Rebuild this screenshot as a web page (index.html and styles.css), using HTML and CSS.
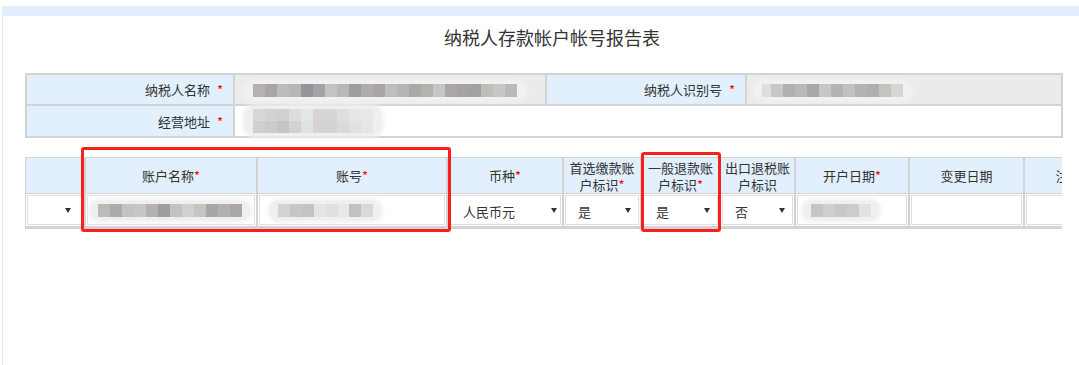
FILE: index.html
```html
<!DOCTYPE html>
<html lang="zh-CN">
<head>
<meta charset="utf-8">
<title>纳税人存款帐户帐号报告表</title>
<link rel="stylesheet" href="styles.css">
</head>
<body>
<div class="page">
  <h1 class="title">纳税人存款帐户帐号报告表</h1>

  <table class="info">
    <colgroup>
      <col class="ic-lab"><col class="ic-val"><col class="ic-lab2"><col class="ic-val2">
    </colgroup>
    <tr class="r1">
      <th>纳税人名称 <span class="req">*</span></th>
      <td class="ro"><span class="blur blur-ro"><span class="mosaic m-name"></span></span></td>
      <th>纳税人识别号 <span class="req">*</span></th>
      <td class="ro id"><span class="blur blur-ro"><span class="mosaic m-id"></span></span></td>
    </tr>
    <tr class="r2">
      <th>经营地址 <span class="req">*</span></th>
      <td colspan="3"><span class="blur"><span class="mosaic m-addr"></span></span></td>
    </tr>
  </table>

  <div class="grid-area">
    <div class="grid-clip">
      <table class="grid">
        <colgroup>
          <col class="g0"><col class="g1"><col class="g2"><col class="g3"><col class="g4">
          <col class="g5"><col class="g6"><col class="g7"><col class="g8"><col class="g9">
        </colgroup>
        <thead>
          <tr>
            <th></th>
            <th>账户名称<span class="req">*</span></th>
            <th>账号<span class="req">*</span></th>
            <th>币种<span class="req">*</span></th>
            <th><span class="ln">首选缴款账</span><span class="ln">户标识<span class="req">*</span></span></th>
            <th><span class="ln">一般退款账</span><span class="ln">户标识<span class="req">*</span></span></th>
            <th><span class="ln">出口退税账</span><span class="ln">户标识</span></th>
            <th>开户日期<span class="req">*</span></th>
            <th>变更日期</th>
            <th>注销日期</th>
          </tr>
        </thead>
        <tbody>
          <tr>
            <td><div class="box sel sel0"><span class="caret"></span></div></td>
            <td><div class="box inp inp-name"><span class="blur"><span class="mosaic m-acname"></span></span></div></td>
            <td><div class="box inp inp-no"><span class="tick"></span><span class="blur"><span class="mosaic m-acno"></span></span></div></td>
            <td><div class="box sel sel-cur"><span class="val">人民币元</span><span class="caret"></span></div></td>
            <td><div class="box sel"><span class="val">是</span><span class="caret"></span></div></td>
            <td><div class="box sel"><span class="val">是</span><span class="caret"></span></div></td>
            <td><div class="box sel"><span class="val">否</span><span class="caret"></span></div></td>
            <td><div class="box inp inp-date"><span class="blur"><span class="mosaic m-date"></span></span></div></td>
            <td><div class="box inp"></div></td>
            <td><div class="box inp"></div></td>
          </tr>
        </tbody>
      </table>
    </div>
    <div class="mark mark-a"></div>
    <div class="mark mark-b"></div>
  </div>
</div>
</body>
</html>
```

FILE: styles.css
```css
* { box-sizing: border-box; }

html, body {
  margin: 0;
  background: #fff;
  overflow: hidden;
}

body {
  font-family: "Microsoft YaHei", "Noto Sans CJK SC", "Noto Sans", sans-serif;
  font-size: 13px;
  color: #333;
}

.page {
  margin: 6px 0 0 2px;
  height: 359px;
  border-top: 10px solid #e1effe;
  border-left: 1px solid #dcebfd;
  padding: 9px 0 0 22px;
}

.title {
  margin: 0 0 24px;
  font-size: 18px;
  line-height: 24px;
  font-weight: normal;
  text-align: center;
  color: #333;
}

.req { color: #f00; }

/* ---------- info table ---------- */
.info {
  width: 1036px;
  table-layout: fixed;
  border-collapse: separate;
  border-spacing: 0;
  border: 1px solid #d3d3d3;
}
.ic-lab { width: 208px; }
.ic-val { width: 312px; }
.ic-lab2 { width: 200px; }
.ic-val2 { width: 316px; }

.info th,
.info td {
  border: 1px solid #d3d3d3;
  padding: 0;
  font-weight: normal;
}
.info th {
  background: #e2effd;
  text-align: right;
  padding-right: 10px;
}
.info th .req { margin-left: 4px; }
.info td { padding-left: 10px; background: #fff; }
.info td.ro { background: #ebebeb; }
.info td.id { padding-left: 7px; }
.info .r1 th, .info .r1 td { height: 31px; }
.info .r2 th, .info .r2 td { height: 32px; }

/* blurred (masked) values */
.blur {
  display: inline-flex;
  align-items: center;
  padding: 3px 8px;
  border-radius: 10px;
  background: #efefef;
  box-shadow: 0 0 4px 2px #efefef;
  vertical-align: middle;
}
.blur-ro {
  background: #f1f1f1;
  box-shadow: 0 0 4px 2px #f1f1f1;
}
.mosaic { display: block; height: 13px; }

.m-name {
  width: 264px;
  background: linear-gradient(90deg,
    #b5b1b1 0 12px, #a8a6a7 12px 24px, #bcbcbc 24px 36px, #b6b7b2 36px 48px,
    #98939a 48px 60px, #a3a3a9 60px 72px, #c3c3c1 72px 84px, #b8b9b4 84px 96px,
    #a09c9f 96px 108px, #adadaa 108px 120px, #aaa4a8 120px 132px, #bebebe 132px 144px,
    #b5b5b7 144px 156px, #a9a9ac 156px 168px, #b3b3ae 168px 180px, #c6c6c6 180px 192px,
    #aca6aa 192px 204px, #a4a4a4 204px 216px, #a2a2a4 216px 228px, #bdbdba 228px 240px,
    #c7c7c7 240px 252px, #bababa 252px 264px);
}
.m-id {
  width: 141px;
  background: linear-gradient(90deg,
    #dedede 0 9px, #c8c8c8 9px 21px, #b0b0b0 21px 33px, #b9b9b9 33px 45px,
    #a8a8a8 45px 57px, #c7c7c5 57px 69px, #b4b4b8 69px 81px, #c2c2c2 81px 93px,
    #b3b3b3 93px 105px, #aeaeae 105px 117px, #c3c3c0 117px 129px, #d6d6d6 129px 141px);
}
.m-addr {
  width: 120px;
  height: 24px;
  background:
    linear-gradient(90deg,
      #d8d8d8 0 12px, #d3d3d3 12px 24px, #d0d0d0 24px 36px, #dcdcdc 36px 48px,
      #e2e6e8 48px 60px, #d8d5d5 60px 72px, #d6d6d6 72px 84px, #e0dede 84px 96px,
      #e5e5e5 96px 108px, #e8e8e8 108px 120px) top / 100% 12px no-repeat,
    linear-gradient(90deg,
      #cfcfcf 0 12px, #cbcbcb 12px 24px, #c5c5c5 24px 36px, #d2d2d2 36px 48px,
      #dde3e5 48px 60px, #d5d3d3 60px 72px, #d3d3d3 72px 84px, #d9d9d9 84px 96px,
      #e0e0e0 96px 108px, #e6e6e6 108px 120px) bottom / 100% 12px no-repeat;
}
.m-acname {
  width: 144px;
  background: linear-gradient(90deg,
    #bdb9b9 0 12px, #aeaaab 12px 24px, #c3c3c3 24px 36px, #c7c7c7 36px 48px,
    #b6b2b3 48px 60px, #9e9ea2 60px 72px, #c2c2c0 72px 84px, #d0d0d0 84px 96px,
    #c2c6c0 96px 108px, #a7a7a5 108px 120px, #b3b0b3 120px 132px, #aaa6aa 132px 144px);
}
.m-acno {
  width: 95px;
  background: linear-gradient(90deg,
    #d3d3d3 0 12px, #c6c6c6 12px 24px, #c0c4c4 24px 36px, #e5e5e5 36px 48px,
    #e0e0e0 48px 60px, #e8e8e8 60px 71px, #c0c2c2 71px 83px, #d9d9d5 83px 95px);
}
.m-date {
  width: 60px;
  background: linear-gradient(90deg,
    #c5c5c5 0 12px, #cecece 12px 24px, #c5c8ca 24px 36px, #cdcdcd 36px 48px,
    #e2e2e2 48px 60px);
}

/* ---------- grid table ---------- */
.grid-area {
  position: relative;
  margin-top: 19px;
  width: 1037px;
}
.grid-clip {
  width: 1037px;
  overflow: hidden;
}
.grid {
  width: 1114px;
  table-layout: fixed;
  border-collapse: separate;
  border-spacing: 0;
  border-top: 1px solid #d3d3d3;
  border-left: 1px solid #d3d3d3;
  border-bottom: 1px solid #d3d3d3;
}
.g0 { width: 60px; }
.g1 { width: 172px; }
.g2 { width: 190px; }
.g3 { width: 116px; }
.g4 { width: 78px; }
.g5 { width: 79px; }
.g6 { width: 75px; }
.g7 { width: 114px; }
.g8 { width: 115px; }
.g9 { width: 115px; }

.grid th,
.grid td {
  border: 1px solid #d3d3d3;
  border-left: 0;
  border-top: 0;
  padding: 0;
}
.grid th {
  height: 36px;
  background: #e2effd;
  font-weight: normal;
  text-align: center;
  line-height: 17px;
  padding: 0 2px;
  border-right: 2px solid #d3d3d3;
  white-space: nowrap;
}
.grid th .ln { display: block; }
.grid td {
  height: 34px;
  padding: 1px;
  border-right: 2px solid #d3d3d3;
  border-bottom: 2px solid #d3d3d3;
}

.box {
  height: 30px;
  border: 1px solid #dedede;
  display: flex;
  align-items: center;
  background: #fff;
}
.sel { padding: 0 7px 0 12px; }
.sel .val { padding-top: 3px; }
.sel0 { padding-right: 11px; }
.sel-cur { padding-left: 13px; padding-right: 3px; }
.caret {
  margin-left: auto;
  width: 0;
  height: 0;
  border-left: 3px solid transparent;
  border-right: 3px solid transparent;
  border-top: 5px solid #333;
}
.inp { padding-left: 3px; }
.inp-name { padding-left: 2px; }
.inp-no { padding-left: 10px; }
.inp-date { padding-left: 5px; }
.tick {
  width: 2px;
  height: 6px;
  margin-right: -2px;
  background: #c9c9c9;
  border-radius: 1px;
}

/* red highlight marks over the table */
.mark {
  position: absolute;
  border: 3px solid #fb1f1a;
  border-radius: 3px;
  pointer-events: none;
}
.mark-a { left: 56px; top: -10px; width: 370px; height: 85px; }
.mark-b { left: 616px; top: -5px; width: 80px; height: 80px; }
```
